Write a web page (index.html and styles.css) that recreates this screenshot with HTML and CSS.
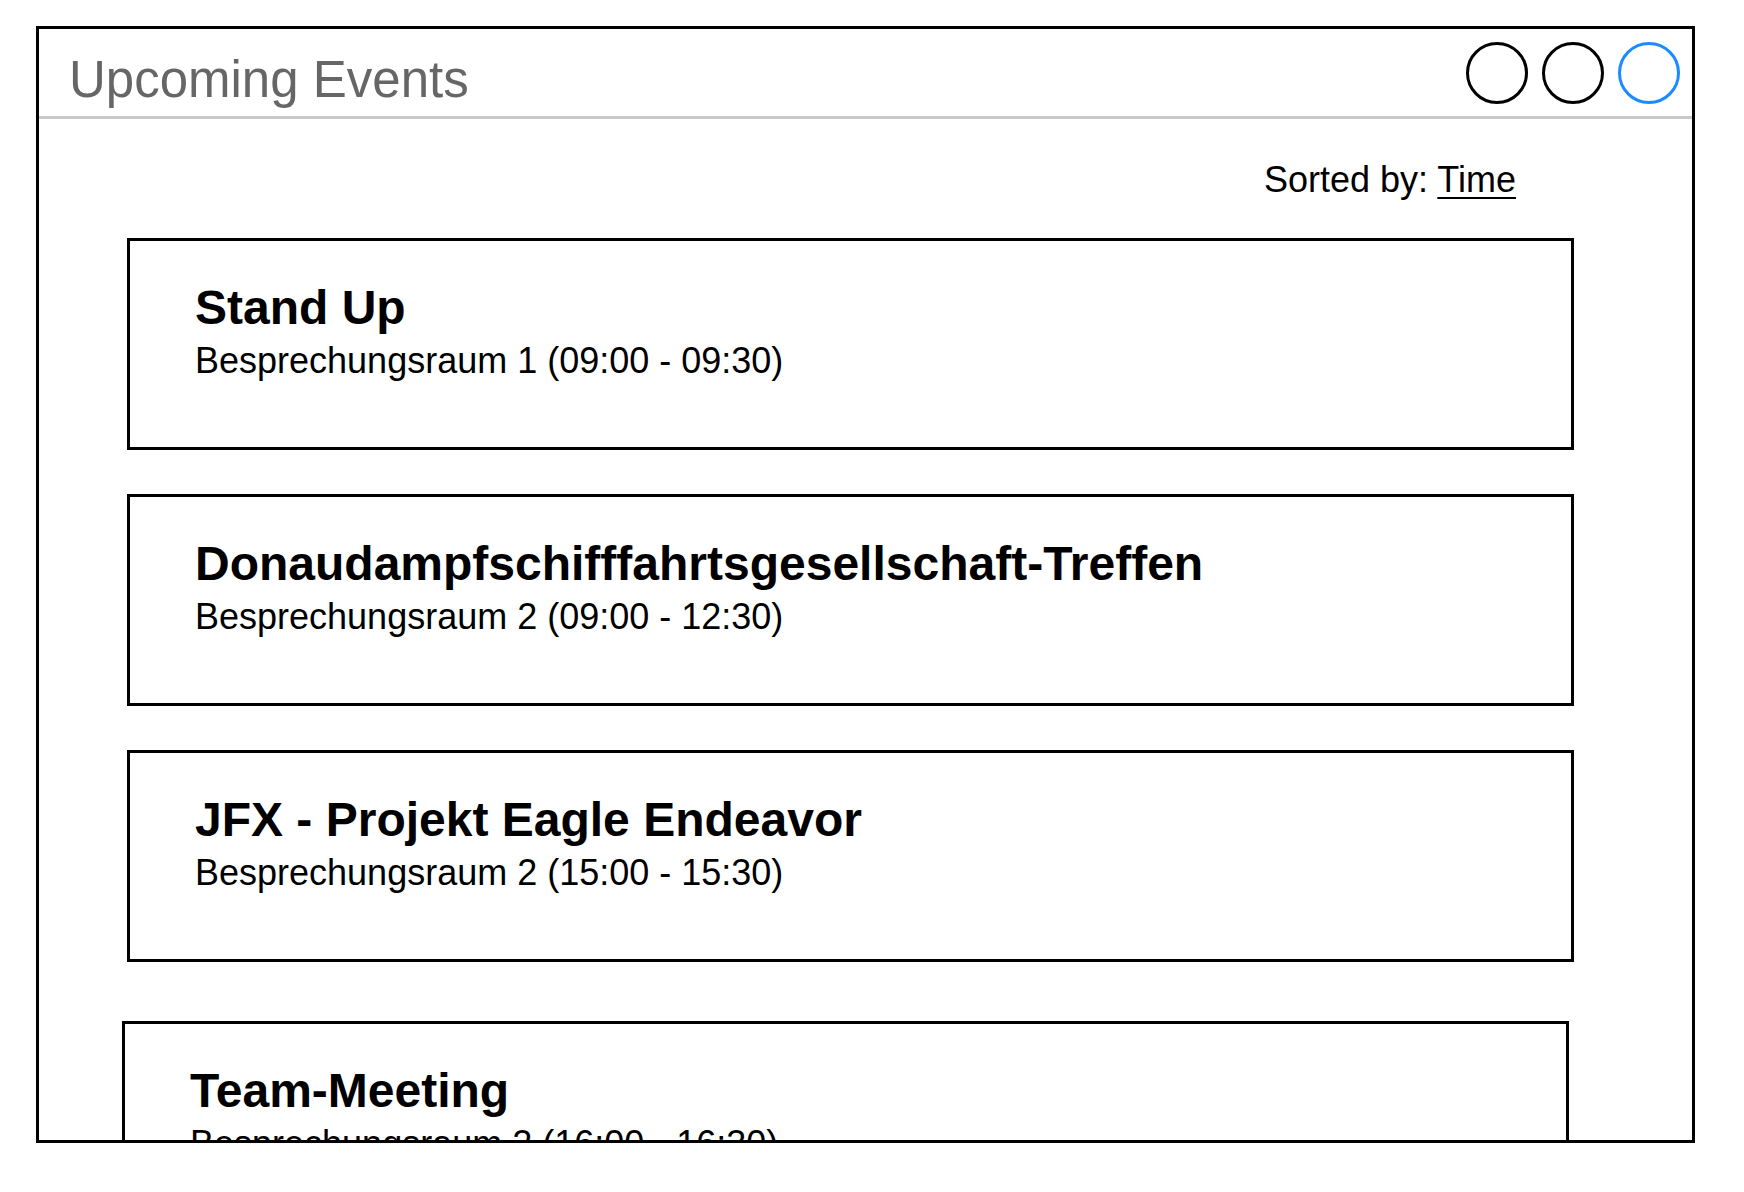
FILE: index.html
```html
<!DOCTYPE html>
<html lang="de">
<head>
<meta charset="utf-8">
<title>Upcoming Events</title>
<link rel="stylesheet" href="styles.css">
</head>
<body>
<div class="window">
  <header class="header">
    <h1 class="title">Upcoming Events</h1>
    <div class="controls">
      <span class="dot"></span>
      <span class="dot"></span>
      <span class="dot dot-active"></span>
    </div>
  </header>
  <div class="sortbar">Sorted by: <a class="sort-link" href="#">Time</a></div>
  <div class="events">
    <div class="card">
      <div class="card-title">Stand Up</div>
      <div class="card-sub">Besprechungsraum 1 (09:00 - 09:30)</div>
    </div>
    <div class="card">
      <div class="card-title">Donaudampfschifffahrtsgesellschaft-Treffen</div>
      <div class="card-sub">Besprechungsraum 2 (09:00 - 12:30)</div>
    </div>
    <div class="card">
      <div class="card-title">JFX - Projekt Eagle Endeavor</div>
      <div class="card-sub">Besprechungsraum 2 (15:00 - 15:30)</div>
    </div>
    <div class="card card-shifted">
      <div class="card-title">Team-Meeting</div>
      <div class="card-sub">Besprechungsraum 2 (16:00 - 16:30)</div>
    </div>
  </div>
</div>
</body>
</html>
```

FILE: styles.css
```css
html, body {
  margin: 0;
  padding: 0;
  background: #fff;
}

body {
  font-family: "Liberation Sans", Arial, Helvetica, sans-serif;
  color: #000;
}

.window {
  box-sizing: border-box;
  margin: 26px 0 0 36px;
  width: 1659px;
  height: 1117px;
  border: 3px solid #000;
  overflow: hidden;
}

.header {
  display: flex;
  justify-content: space-between;
  align-items: flex-start;
  height: 87px;
  padding: 0 12px 0 30px;
  border-bottom: 3px solid #c8c8c8;
}

.title {
  margin: 0;
  padding-top: 21px;
  font-size: 51px;
  line-height: 60px;
  font-weight: normal;
  color: #666;
}

.controls {
  display: flex;
  gap: 14px;
  margin-top: 13px;
}

.dot {
  box-sizing: border-box;
  width: 62px;
  height: 62px;
  border: 3px solid #000;
  border-radius: 50%;
}

.dot-active {
  border-color: #1a8cff;
}

.sortbar {
  margin-top: 39px;
  padding-right: 176px;
  text-align: right;
  font-size: 36px;
  line-height: 44px;
}

.sort-link {
  color: #000;
  text-decoration: underline;
  text-decoration-thickness: 2px;
  text-underline-offset: 5px;
}

.events {
  display: flex;
  flex-direction: column;
  gap: 44px;
  margin: 36px 118px 0 88px;
}

.card {
  box-sizing: border-box;
  flex: none;
  height: 212px;
  border: 3px solid #000;
  padding: 39px 0 0 65px;
}

.card-shifted {
  margin: 15px 5px 0 -5px;
}

.card-title {
  font-size: 48px;
  line-height: 56px;
  font-weight: bold;
}

.card-sub {
  font-size: 36px;
  line-height: 50px;
}
```
